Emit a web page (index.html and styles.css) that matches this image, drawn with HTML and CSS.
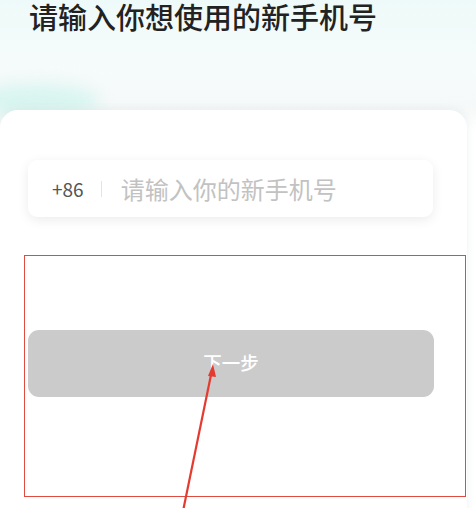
FILE: index.html
```html
<!DOCTYPE html>
<html lang="zh-CN">
<head>
    <meta charset="UTF-8">
    <meta name="viewport" content="width=device-width, initial-scale=1.0">
    <title>更换手机号</title>
    <link rel="stylesheet" href="styles.css">
</head>
<body>
    <div class="page">
        <!-- 顶部标题 -->
        <header class="top">
            <div class="blob"></div>
            <h1>请输入你想使用的新手机号</h1>
        </header>

        <!-- 表单卡片 -->
        <div class="card">
            <div class="phone-input">
                <span class="prefix">+86</span>
                <span class="divider"></span>
                <span class="placeholder">请输入你的新手机号</span>
            </div>
            <button class="next-button">下一步</button>
        </div>

        <!-- 标注 -->
        <div class="mark-box"></div>
        <svg class="mark-arrow" width="60" height="160" viewBox="0 0 60 160">
            <line x1="12" y1="160" x2="42" y2="14" stroke="#e53a2f" stroke-width="2.2"/>
            <polygon points="43,8 38,20 46,21" fill="#e53a2f"/>
        </svg>
    </div>
</body>
</html>
```

FILE: styles.css
```css
body {
    margin: 0;
    font-family: "Noto Sans CJK SC", "Noto Sans", sans-serif;
    background: #ffffff;
}

.page {
    position: relative;
    width: 476px;
    height: 508px;
    overflow: hidden;
    background: linear-gradient(180deg, #eefaf9 0%, #f5fbfb 60px, #f7f9f9 110px, #ffffff 130px);
}

.top {
    position: relative;
    height: 110px;
}

.blob {
    position: absolute;
    left: -30px;
    top: 84px;
    width: 130px;
    height: 34px;
    border-radius: 50%;
    background: #d8f5f0;
    filter: blur(8px);
}

.top h1 {
    position: relative;
    margin: 0;
    padding: 0 0 0 29px;
    font-size: 29px;
    font-weight: 500;
    color: #222222;
    line-height: 33px;
}

.card {
    position: relative;
    margin: 0 9px 0 0;
    padding: 50px 0 0 28px;
    height: 400px;
    background: #ffffff;
    border-radius: 18px 18px 0 0;
    box-shadow: 0 -2px 8px rgba(200, 215, 215, 0.3);
}

.phone-input {
    display: flex;
    align-items: center;
    width: 405px;
    height: 57px;
    background: #ffffff;
    border-radius: 9px;
    box-shadow: 0 3px 12px rgba(0, 0, 0, 0.08);
}

.prefix {
    margin-left: 24px;
    font-size: 19px;
    color: #555555;
}

.divider {
    width: 1px;
    height: 16px;
    margin: 0 19px 0 17px;
    background: #e4e4e4;
}

.placeholder {
    font-size: 24px;
    color: #c2c2c2;
}

.next-button {
    display: block;
    width: 406px;
    height: 67px;
    margin-top: 113px;
    border: none;
    border-radius: 11px;
    background: #cbcbcb;
    color: #ffffff;
    font-family: inherit;
    font-size: 18.5px;
    font-weight: 500;
    padding: 0 0 4px 0;
}

.mark-box {
    position: absolute;
    left: 24px;
    top: 255px;
    width: 440px;
    height: 240px;
    border: 1.5px solid #e04a40;
}

.mark-arrow {
    position: absolute;
    left: 170px;
    top: 356px;
}
```
